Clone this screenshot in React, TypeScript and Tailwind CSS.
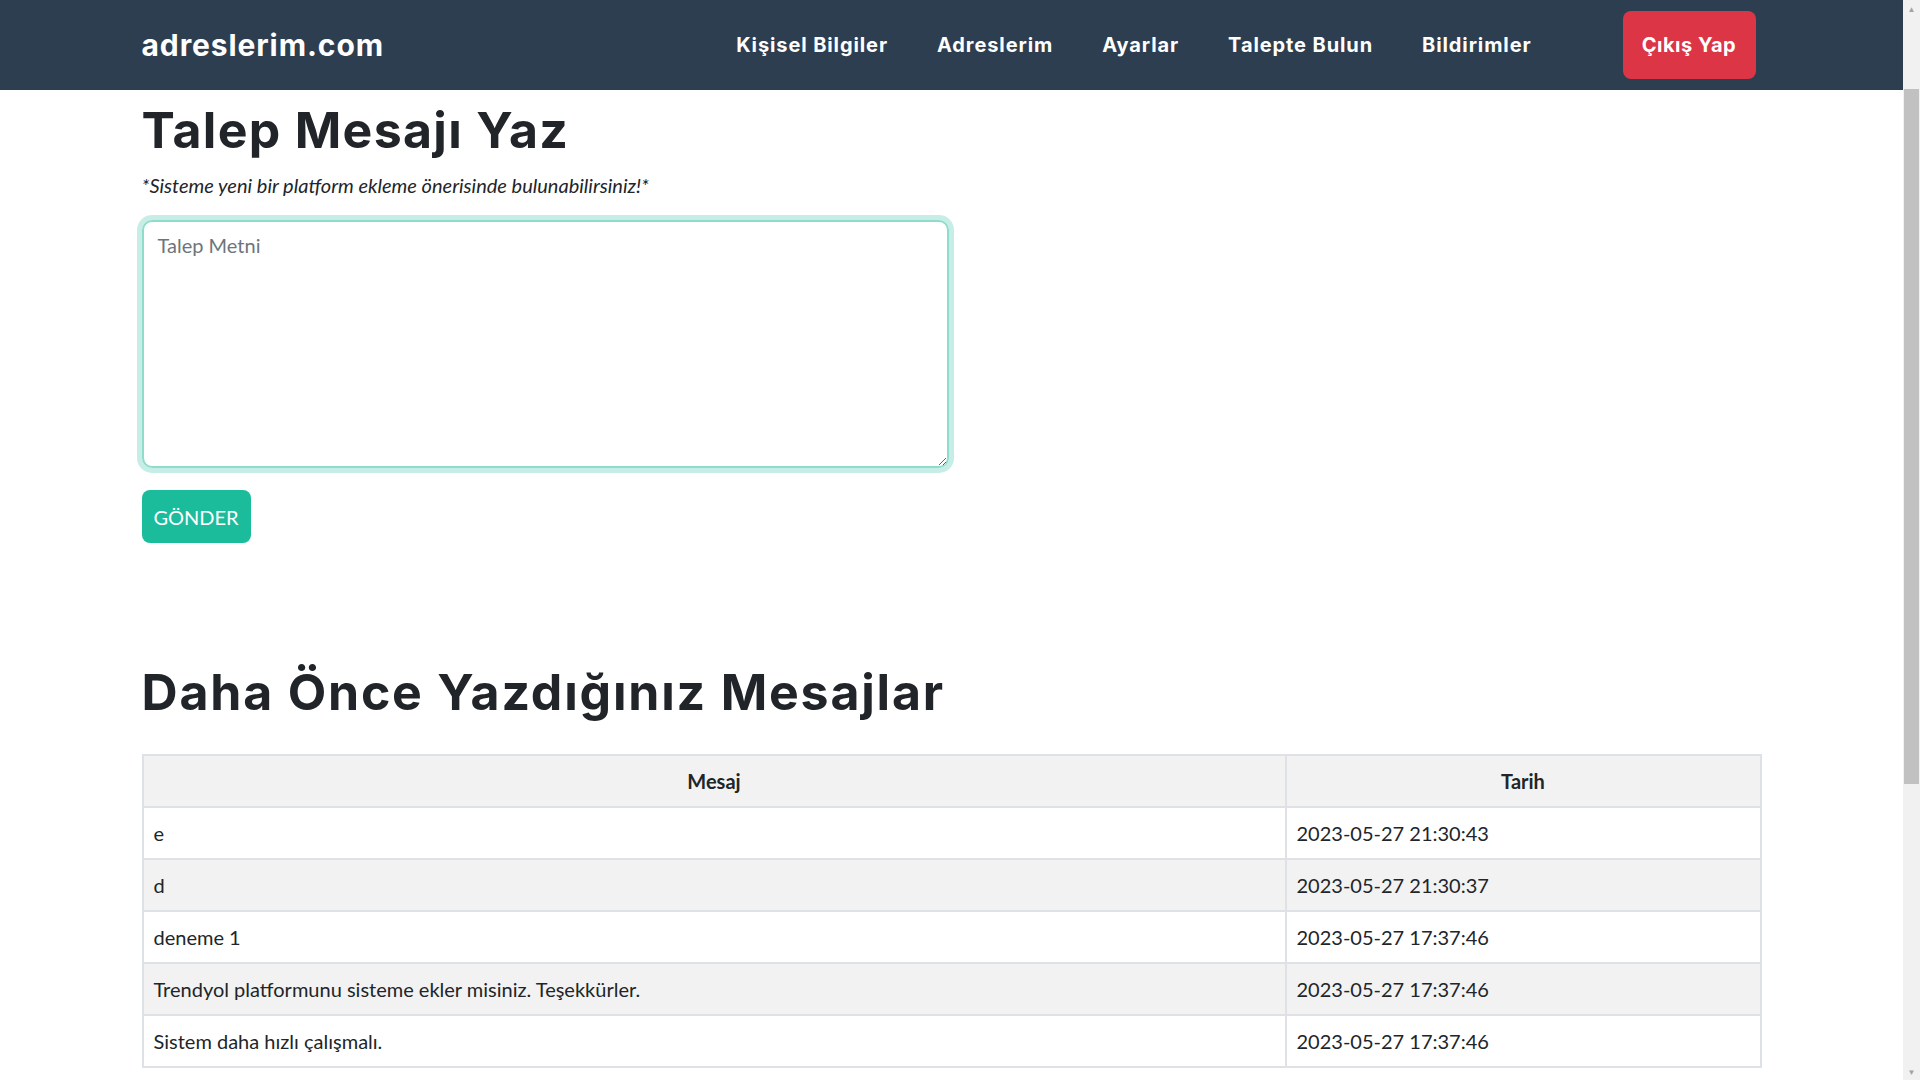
import React from 'react';

const heading = "font-['Inter','Open_Sans',sans-serif]";
const body = "font-['Lato','Open_Sans',sans-serif]";

function FakeScrollbar() {
  // browser scrollbar as seen in the reference (page scrolled slightly)
  return (
    <div className="fixed top-0 right-0 h-screen w-[17px] bg-[#f1f1f1] flex flex-col items-center">
      <div className="h-[17px] w-full flex items-center justify-center text-[#a3a3a3] text-[8px] leading-none">▲</div>
      <div className="h-[72px]" />
      <div className="h-[695px] w-[15px] bg-[#c1c1c1]" />
      <div className="flex-1" />
      <div className="h-[17px] w-full flex items-center justify-center text-[#a3a3a3] text-[8px] leading-none">▼</div>
    </div>
  );
}

export default function App() {
  const links = ['Kişisel Bilgiler', 'Adreslerim', 'Ayarlar', 'Talepte Bulun', 'Bildirimler'];

  const messages = [
    { text: 'e', date: '2023-05-27 21:30:43' },
    { text: 'd', date: '2023-05-27 21:30:37' },
    { text: 'deneme 1', date: '2023-05-27 17:37:46' },
    { text: 'Trendyol platformunu sisteme ekler misiniz. Teşekkürler.', date: '2023-05-27 17:37:46' },
    { text: 'Sistem daha hızlı çalışmalı.', date: '2023-05-27 17:37:46' },
  ];

  return (
    <div className={`min-h-screen bg-white text-[#212529] pr-[17px] ${body}`}>
      {/* Navbar */}
      <nav className="h-[90px] bg-[#2c3e50]">
        <div className="max-w-[1650px] mx-auto px-[15px] h-full flex items-center">
          <a className={`text-white text-[30px] font-bold tracking-[0.9px] ${heading}`}>adreslerim.com</a>
          <div className="flex-1" />
          <ul className={`flex items-center gap-[49px] text-white text-[20px] font-bold tracking-[0.9px] ${heading}`}>
            {links.map((l) => (
              <li key={l}>{l}</li>
            ))}
          </ul>
          <button className={`ml-[91px] mr-[6px] w-[133px] h-[68px] rounded-[8px] bg-[#dc3545] text-white text-[20px] font-bold tracking-[0.5px] ${heading}`}>
            Çıkış Yap
          </button>
        </div>
      </nav>

      {/* Content */}
      <main className="max-w-[1650px] mx-auto px-[15px] pt-[10px] pb-[120px]">
        <h1 className={`text-[50px] leading-[60px] font-bold tracking-[1.3px] ${heading}`}>Talep Mesajı Yaz</h1>
        <p className="mt-[10px] text-[20px] leading-[30px] italic">
          *Sisteme yeni bir platform ekleme önerisinde bulunabilirsiniz!*
        </p>

        <textarea
          autoFocus
          placeholder="Talep Metni"
          className="block mt-[20px] w-[807px] h-[248px] px-[14px] py-[8px] text-[20px] leading-[30px] border-2 border-[#8edccb] rounded-[10px] outline-none shadow-[0_0_0_5px_rgba(26,188,156,0.25)] placeholder:text-[#6c757d]"
        />

        <button className="mt-[22px] w-[109px] h-[53px] rounded-[8px] bg-[#1abc9c] text-white text-[20px]">
          GÖNDER
        </button>

        <h2 className={`mt-[119px] text-[50px] leading-[60px] font-bold tracking-[1.8px] ${heading}`}>
          Daha Önce Yazdığınız Mesajlar
        </h2>

        <table className="mt-[32px] w-full border-collapse text-[20px]">
          <thead>
            <tr className="bg-[#f2f2f2]">
              <th className="w-[1143px] h-[52px] border-2 border-[#dee2e6] font-bold text-center">Mesaj</th>
              <th className="h-[52px] border-2 border-[#dee2e6] font-bold text-center">Tarih</th>
            </tr>
          </thead>
          <tbody>
            {messages.map((m, i) => (
              <tr key={i} className={i % 2 === 1 ? 'bg-[#f2f2f2]' : 'bg-white'}>
                <td className="h-[52px] px-[10px] border-2 border-[#dee2e6]">{m.text}</td>
                <td className="h-[52px] px-[10px] border-2 border-[#dee2e6]">{m.date}</td>
              </tr>
            ))}
          </tbody>
        </table>
      </main>

      <FakeScrollbar />
    </div>
  );
}
